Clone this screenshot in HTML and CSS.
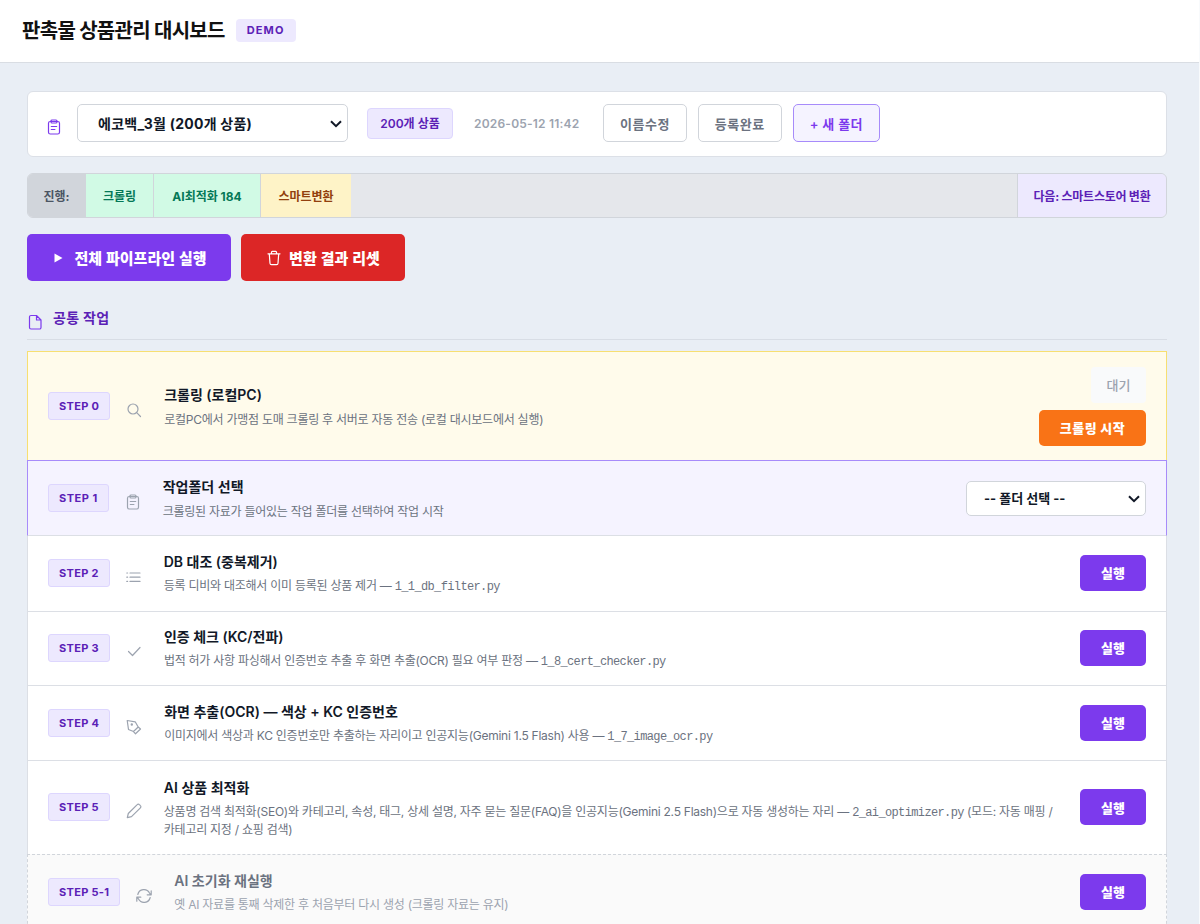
FILE: index.html
```html
<!DOCTYPE html>
<html lang="ko">
<head>
  <meta charset="UTF-8" />
  <meta name="viewport" content="width=device-width, initial-scale=1.0" />
  <title>판촉물 상품관리 대시보드</title>
  <link rel="stylesheet" href="styles.css">
</head>
<body>

  <header class="header">
    <h1>판촉물 상품관리 대시보드</h1>
    <span class="demo-badge">DEMO</span>
  </header>

  <main class="container">

    <div class="folder-bar">
      <svg class="icon folder-icon" viewBox="0 0 16 16"><rect x="2.5" y="2.5" width="11" height="12.5" rx="1.8"/><rect x="5" y="1" width="6" height="3" rx="1"/><path d="M5.3 7.5h5.4M5.3 10.5h3.6"/></svg>
      <div class="select-wrap folder-select">
        <select>
          <option>에코백_3월 (200개 상품)</option>
        </select>
        <svg class="chevron" viewBox="0 0 12 8"><path d="M1 1.2l5 5 5-5"/></svg>
      </div>
      <span class="count-badge">200개 상품</span>
      <span class="date">2026-05-12 11:42</span>
      <div class="folder-actions">
        <button class="btn-line">이름수정</button>
        <button class="btn-line">등록완료</button>
        <button class="btn-line new">+ 새 폴더</button>
      </div>
    </div>

    <div class="progress">
      <span class="seg label">진행:</span>
      <span class="seg done crawl">크롤링</span>
      <span class="seg done ai">AI최적화 184</span>
      <span class="seg doing">스마트변환</span>
      <span class="seg next">다음: 스마트스토어 변환</span>
    </div>

    <div class="main-actions">
      <button class="btn-big run-all">
        <svg class="play" viewBox="0 0 9 10"><path d="M0.5 0.5L8.5 5l-8 4.5z"/></svg>
        전체 파이프라인 실행
      </button>
      <button class="btn-big reset">
        <svg class="icon" viewBox="0 0 16 16"><path d="M2 3.8h12M5.5 3.6V2.2a.8.8 0 0 1 .8-.8h3.4a.8.8 0 0 1 .8.8v1.4M3.3 4l.7 9.2a1.5 1.5 0 0 0 1.5 1.4h5a1.5 1.5 0 0 0 1.5-1.4l.7-9.2"/></svg>
        변환 결과 리셋
      </button>
    </div>

    <h2 class="section-title">
      <svg class="icon" viewBox="0 0 16 16"><path d="M9.5 1.5H4A1.5 1.5 0 0 0 2.5 3v10.5A1.5 1.5 0 0 0 4 15h8.5a1.5 1.5 0 0 0 1.5-1.5V6zM9.5 1.5V6H14"/></svg>
      <span>공통 작업</span>
    </h2>

    <div class="steps">
      <div class="step crawl-step">
        <span class="step-no">STEP 0</span>
        <svg class="icon" viewBox="0 0 16 16"><circle cx="7" cy="7" r="5"/><path d="M10.7 10.7L14.5 14.5"/></svg>
        <div class="step-text">
          <h3>크롤링 (로컬PC)</h3>
          <p>로컬PC에서 가맹점 도매 크롤링 후 서버로 자동 전송 (로컬 대시보드에서 실행)</p>
        </div>
        <div class="step-side">
          <span class="waiting">대기</span>
          <button class="btn-run start">크롤링 시작</button>
        </div>
      </div>

      <div class="step active">
        <span class="step-no">STEP 1</span>
        <svg class="icon" viewBox="0 0 16 16"><rect x="2.5" y="2.5" width="11" height="12.5" rx="1.8"/><rect x="5" y="1" width="6" height="3" rx="1"/><path d="M5.3 7.5h5.4M5.3 10.5h3.6"/></svg>
        <div class="step-text">
          <h3>작업폴더 선택</h3>
          <p>크롤링된 자료가 들어있는 작업 폴더를 선택하여 작업 시작</p>
        </div>
        <div class="select-wrap step-select">
          <select>
            <option>-- 폴더 선택 --</option>
          </select>
          <svg class="chevron" viewBox="0 0 12 8"><path d="M1 1.2l5 5 5-5"/></svg>
        </div>
      </div>

      <div class="step first">
        <span class="step-no">STEP 2</span>
        <svg class="icon" viewBox="0 0 16 16"><path d="M4 4H14M4 8.200H14M4 12.400H14M.8 4h.8M.8 8.200h.8M.8 12.400h.8"/></svg>
        <div class="step-text">
          <h3>DB 대조 (중복제거)</h3>
          <p>등록 디비와 대조해서 이미 등록된 상품 제거 — <code>1_1_db_filter.py</code></p>
        </div>
        <button class="btn-run">실행</button>
      </div>

      <div class="step short">
        <span class="step-no">STEP 3</span>
        <svg class="icon" viewBox="0 0 16 16"><path d="M2.5 7.5l4 4L14 3.5"/></svg>
        <div class="step-text">
          <h3>인증 체크 (KC/전파)</h3>
          <p>법적 허가 사항 파싱해서 인증번호 추출 후 화면 추출(OCR) 필요 여부 판정 — <code>1_8_cert_checker.py</code></p>
        </div>
        <button class="btn-run">실행</button>
      </div>

      <div class="step">
        <span class="step-no">STEP 4</span>
        <svg class="icon" viewBox="0 0 16 16"><path d="M1.2 1.5l8 1.3 3 5.2-4.7 4.5-5-2zM12.200 8l2.300 2-5 4.800-2-2.300"/><circle cx="5.800" cy="5.500" r=".6"/></svg>
        <div class="step-text">
          <h3>화면 추출(OCR) — 색상 + KC 인증번호</h3>
          <p>이미지에서 색상과 KC 인증번호만 추출하는 자리이고 인공지능(Gemini 1.5 Flash) 사용 — <code>1_7_image_ocr.py</code></p>
        </div>
        <button class="btn-run">실행</button>
      </div>

      <div class="step tall">
        <span class="step-no">STEP 5</span>
        <svg class="icon" viewBox="0 0 16 16"><path d="M1.3 14.7l1-4.2L11.2 1.6a1.5 1.5 0 0 1 2.2 0l1 1a1.5 1.5 0 0 1 0 2.2L5.5 13.7z"/></svg>
        <div class="step-text">
          <h3>AI 상품 최적화</h3>
          <p>상품명 검색 최적화(SEO)와 카테고리, 속성, 태그, 상세 설명, 자주 묻는 질문(FAQ)을 인공지능(Gemini 2.5 Flash)으로 자동 생성하는 자리 — <code>2_ai_optimizer.py</code> (모드: 자동 매핑 /<br>카테고리 지정 / 쇼핑 검색)</p>
        </div>
        <button class="btn-run">실행</button>
      </div>

      <div class="step sub">
        <span class="step-no">STEP 5-1</span>
        <svg class="icon" viewBox="0 0 16 16"><path d="M1.8 6.5A6.3 6.3 0 0 1 13.5 5l1.2 1.8M15.2 2.8v4h-4M14.2 9.5A6.3 6.3 0 0 1 2.5 11L1.3 9.2M.8 13.2v-4h4"/></svg>
        <div class="step-text">
          <h3>AI 초기화 재실행</h3>
          <p>옛 AI 자료를 통째 삭제한 후 처음부터 다시 생성 (크롤링 자료는 유지)</p>
        </div>
        <button class="btn-run">실행</button>
      </div>
    </div>

  </main>

</body>
</html>
```
FILE: styles.css
```css
* {
  box-sizing: border-box;
}

body {
  margin: 0;
  height: 924px;
  overflow: hidden;
  background-color: #e9eef5;
  border-right: 1px solid #f8fafc;
  color: #111827;
  font-family: Inter, "Noto Sans CJK KR", sans-serif;
}

h1, h2, h3, p {
  margin: 0;
}

button, select {
  font-family: inherit;
  cursor: pointer;
}

.icon {
  width: 16px;
  height: 16px;
  flex-shrink: 0;
  fill: none;
  stroke: currentColor;
  stroke-width: 1.2;
  stroke-linecap: round;
  stroke-linejoin: round;
}

.header {
  display: flex;
  align-items: center;
  gap: 11px;
  height: 63px;
  padding: 0 22px 1px;
  background-color: white;
  border-bottom: 1px solid #d9dde3;
}

.header h1 {
  color: #111111;
  font-size: 20px;
  font-weight: 700;
  letter-spacing: -0.7px;
  line-height: 28px;
}

.demo-badge {
  padding: 0 11px;
  line-height: 23px;
  font-size: 11px;
  font-weight: 700;
  letter-spacing: 1.1px;
  color: #5b21b6;
  background-color: #ede9fe;
  border-radius: 4px;
}

.container {
  padding: 28px 32px 0 27px;
}

.folder-bar {
  display: flex;
  align-items: center;
  height: 66px;
  padding: 0 18px 2px;
  background-color: white;
  border: 1px solid #dce0e7;
  border-radius: 6px;
}

.folder-icon {
  color: #7c3aed;
  margin: 8px 15px 0 0;
}

.select-wrap {
  position: relative;
}

.select-wrap select {
  appearance: none;
  width: 100%;
  height: 100%;
  color: #111827;
  background-color: white;
  border: 1px solid #d1d5db;
  border-radius: 5px;
  font-weight: 700;
}

.chevron {
  position: absolute;
  right: 6px;
  top: 50%;
  width: 12px;
  height: 8px;
  margin-top: -3px;
  fill: none;
  stroke: #111827;
  stroke-width: 2;
  pointer-events: none;
}

.folder-select {
  width: 271px;
  height: 38px;
  margin-right: 19px;
}

.folder-select select {
  padding: 0 20px;
  font-size: 14px;
  letter-spacing: 0.25px;
}

.count-badge {
  width: 86px;
  padding-top: 1px;
  text-align: center;
  line-height: 28px;
  font-size: 12px;
  font-weight: 600;
  color: #5b21b6;
  background-color: #ede9fe;
  border: 1px solid #ddd6fe;
  border-radius: 4px;
  margin-right: 21px;
}

.date {
  width: 129px;
  font-size: 12px;
  font-weight: 600;
  letter-spacing: 0.2px;
  color: #9ca3af;
}

.folder-actions {
  display: flex;
  gap: 11px;
}

.btn-line {
  height: 38px;
  padding: 0 16px;
  font-size: 13px;
  font-weight: 600;
  letter-spacing: 0.5px;
  color: #6b7280;
  background-color: white;
  border: 1px solid #d1d5db;
  border-radius: 5px;
}

.btn-line.new {
  color: #7c3aed;
  background-color: #f5f3ff;
  border-color: #a78bfa;
  letter-spacing: 0.3px;
}

.progress {
  display: flex;
  height: 45px;
  margin-top: 16px;
  background-color: #e5e7eb;
  border: 1px solid #d1d5db;
  border-radius: 6px;
  overflow: hidden;
}

.seg {
  padding-top: 1px;
  text-align: center;
  line-height: 43px;
  font-size: 12px;
  font-weight: 700;
  border-right: 1px solid #d1d5db;
}

.seg.label {
  width: 58px;
  color: #4b5563;
  background-color: #d1d5db;
}

.seg.done {
  color: #047857;
  background-color: #d1fae5;
}

.seg.crawl {
  width: 68px;
}

.seg.ai {
  width: 107px;
}

.seg.doing {
  width: 90px;
  color: #92400e;
  background-color: #fef3c7;
  border-right: none;
}

.seg.next {
  width: 149px;
  margin-left: auto;
  color: #5b21b6;
  background-color: #ede9fe;
  border-left: 1px solid #d1d5db;
  border-right: none;
  letter-spacing: -0.25px;
}

.main-actions {
  display: flex;
  gap: 10px;
  margin-top: 16px;
}

.btn-big {
  display: flex;
  align-items: center;
  justify-content: center;
  gap: 7px;
  height: 47px;
  padding: 0;
  border: none;
  border-radius: 5px;
  color: white;
  font-size: 15px;
  font-weight: 900;
  word-spacing: 1px;
}

.run-all {
  width: 204px;
  gap: 11px;
  padding-left: 3px;
  background-color: #7c3aed;
}

.reset {
  width: 164px;
  background-color: #dc2626;
}

.play {
  width: 9px;
  height: 10px;
  fill: white;
}

.section-title {
  display: flex;
  align-items: center;
  gap: 10px;
  height: 59px;
  padding-top: 15px;
  border-bottom: 1px solid #d8dde5;
  color: #5b21b6;
  font-size: 14px;
  font-weight: 700;
  letter-spacing: 0.3px;
}

.section-title span {
  margin-top: -1px;
}

.section-title .icon {
  margin-top: 8px;
  color: #7c3aed;
}

.steps {
  margin-top: 11px;
}

.step {
  display: flex;
  align-items: center;
  height: 75px;
  padding: 0 20px 1px;
  background-color: white;
  border: 1px solid #dcdfe5;
  border-top: none;
}

.step.first {
  height: 76px;
  padding-bottom: 2px;
}

.step.short {
  height: 74px;
  padding-bottom: 2px;
}

.step.tall {
  height: 93px;
  border-bottom: none;
}

.step.crawl-step {
  height: 109px;
  padding-bottom: 0;
  background-color: #fffbeb;
  border: 1px solid #f7df72;
  border-bottom: none;
}

.step.active {
  height: 76px;
  padding-bottom: 0;
  background-color: #f5f3ff;
  border: 1px solid #a78bfa;
  border-bottom-color: #dcdfe5;
}

.step.sub {
  height: 75px;
  padding-bottom: 0;
  background-color: #fafafa;
  border: 1px dashed #d1d5db;
}

.step-no {
  padding: 0 10px;
  line-height: 26px;
  white-space: nowrap;
  font-size: 11px;
  font-weight: 700;
  letter-spacing: 0.3px;
  color: #5b21b6;
  background-color: #ede9fe;
  border: 1px solid #ddd6fe;
  border-radius: 3px;
}

.active .step-no {
  letter-spacing: 0.5px;
}

.step > .icon {
  margin: 8px 22px 0 16px;
  color: #9ca3af;
}

.step-text {
  flex: 1;
  padding-top: 1px;
}

.step-text h3 {
  font-size: 14px;
  font-weight: 600;
  line-height: 22px;
}

.step-text p {
  margin-top: 4px;
  font-size: 12px;
  line-height: 18px;
  letter-spacing: -0.25px;
  color: #6b7280;
  white-space: nowrap;
}

.crawl-step .step-text, .active .step-text {
  padding-top: 0;
}

.crawl-step p, .active p {
  padding-top: 1px;
  margin-bottom: -1px;
}

.step-text code {
  font-family: "Liberation Mono", monospace;
  font-size: 12px;
  line-height: 1;
  letter-spacing: -0.63px;
}

.sub h3 {
  color: #6b7280;
}

.sub .step-text p {
  color: #9ca3af;
}

.step-side {
  display: flex;
  flex-direction: column;
  align-items: flex-end;
  gap: 7px;
}

.waiting {
  width: 55px;
  line-height: 36px;
  text-align: center;
  font-size: 13px;
  font-weight: 500;
  color: #9ca3af;
  background-color: #f9fafb;
  border-radius: 4px;
}

.btn-run {
  width: 66px;
  height: 36px;
  padding: 0;
  border: none;
  border-radius: 5px;
  color: white;
  background-color: #7c3aed;
  font-size: 13px;
  font-weight: 900;
}

.btn-run.start {
  width: 107px;
  background-color: #f97316;
  letter-spacing: 0.5px;
}

.step-select {
  width: 180px;
  height: 35px;
}

.step-select select {
  padding: 0 17px;
  font-size: 13px;
}
```
